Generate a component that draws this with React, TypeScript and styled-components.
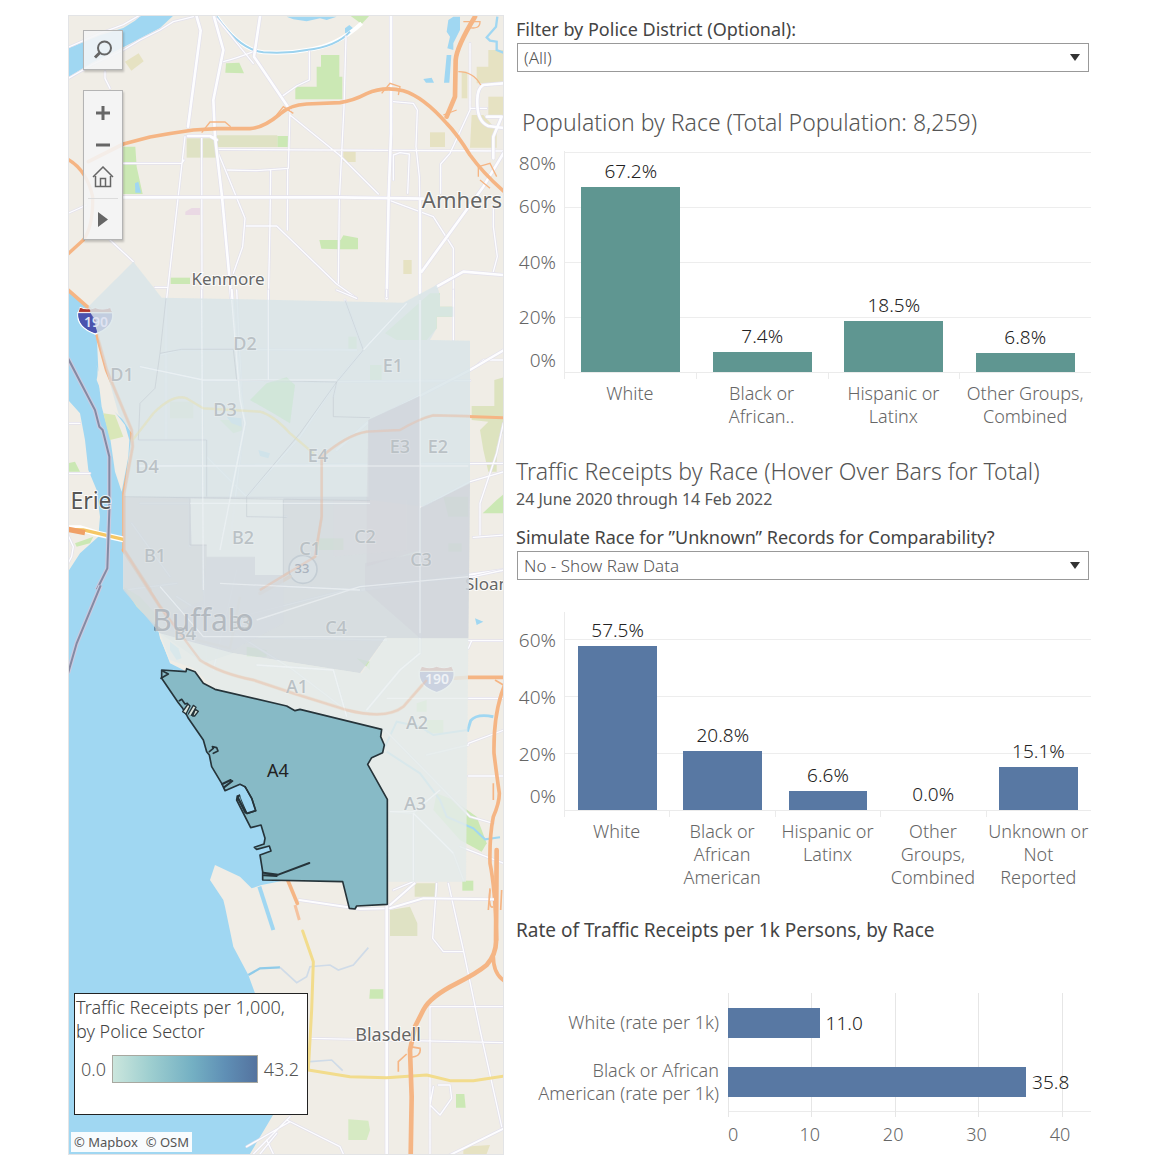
import React from "react";
import styled, { createGlobalStyle } from "styled-components";

const GlobalStyle = createGlobalStyle`
  *, *::before, *::after { box-sizing: border-box; }
  body {
    margin: 0;
    background: #fff;
    color: #555;
    font-family: "Noto Sans", "Open Sans", sans-serif;
  }
`;

/* ---------- page ---------- */

const Dashboard = styled.main`
  display: grid;
  grid-template-columns: minmax(0, 436fr) minmax(0, 575fr);
  gap: 12px;
  padding: 15px 79px 14px 68px;
`;

const SidePanel = styled.div`
  display: flex;
  flex-direction: column;
`;

/* ---------- map ---------- */

const MapPanel = styled.section`
  position: relative;
  min-height: 1140px;
  overflow: hidden;
  border: 1px solid #e3e4e6;
  background: #f0ede6;
`;

const MapCanvas = styled.svg`
  position: absolute;
  inset: 0;
  width: 100%;
  height: 100%;
`;

const ToolStack = styled.div`
  position: absolute;
  top: 14px;
  left: 14px;
  display: flex;
  flex-direction: column;
  gap: 20px;
`;

const ToolGroup = styled.div`
  display: flex;
  flex-direction: column;
  width: 40px;
  border: 1px solid #b4b4b4;
  background: rgba(244, 245, 246, 0.88);
  box-shadow: 1px 2px 2px rgba(0, 0, 0, 0.2);
`;

const ToolButton = styled.button<{ $height: number; $ruled?: boolean }>`
  display: flex;
  align-items: center;
  justify-content: center;
  height: ${(p) => p.$height}px;
  margin: 0 4px;
  padding: 0;
  border: 0;
  border-top: ${(p) => (p.$ruled ? "1px solid #dcdcdc" : "0")};
  background: none;
  color: #666;
  cursor: pointer;
`;

const Legend = styled.div`
  position: absolute;
  left: 5px;
  bottom: 39px;
  width: 234px;
  height: 122px;
  border: 1px solid #222;
  background: #fff;
`;

const LegendTitle = styled.h2`
  margin: 0;
  padding: 1px;
  color: #444;
  font-size: 18px;
  font-weight: 300;
  line-height: 24px;
  white-space: nowrap;
`;

const LegendScale = styled.div`
  display: flex;
  align-items: center;
  gap: 6px;
  margin-top: 11px;
  padding: 0 8px 0 6px;
  font-size: 18px;
  font-weight: 300;
  line-height: 28px;
`;

const LegendRamp = styled.div`
  flex: 1;
  height: 28px;
  border: 1px solid #a8a8a0;
  background: linear-gradient(90deg, #cbe6dd, #9fcfd0 25%, #74b0c3 55%, #5f8fb5 78%, #54739f);
`;

const Attribution = styled.div`
  position: absolute;
  left: 2px;
  bottom: 2px;
  display: flex;
  gap: 8px;
  padding: 0 3px;
  background: rgba(255, 255, 255, 0.92);
  font-size: 13px;
  line-height: 20px;
`;

const AttributionLink = styled.a`
  color: #555;
  text-decoration: none;
`;

/* ---------- filters and headings ---------- */

const Field = styled.div<{ $top: number }>`
  display: flex;
  flex-direction: column;
  padding: ${(p) => p.$top}px 2px 0 0;
`;

const FieldLabel = styled.label`
  color: #444;
  font-size: 18px;
  line-height: 26px;
  white-space: nowrap;
`;

const SelectBox = styled.div`
  position: relative;
  display: flex;
  margin: 1px 0 0 1px;
`;

const Select = styled.select`
  appearance: none;
  width: 100%;
  height: 29px;
  padding: 0 30px 0 6px;
  border: 1px solid #999;
  border-radius: 0;
  background: #fff;
  color: #555;
  font: 300 17px/26px "Noto Sans", "Open Sans", sans-serif;
`;

const SelectArrow = styled.svg`
  position: absolute;
  top: 11px;
  right: 9px;
  pointer-events: none;
`;

const ChartTitle = styled.h2<{ $top: number; $indent?: boolean }>`
  margin: ${(p) => p.$top}px 0 0 ${(p) => (p.$indent ? 6 : 0)}px;
  font-size: 23px;
  font-weight: 300;
  line-height: 30px;
  white-space: nowrap;
`;

const Period = styled.p`
  margin: 0;
  font-size: 16px;
  line-height: 26px;
`;

const RateTitle = styled.h2`
  margin: 27px 0 0;
  color: #444;
  font-size: 19px;
  font-weight: 400;
  line-height: 28px;
  white-space: nowrap;
`;

/* ---------- column charts ---------- */

const ColumnFigure = styled.div<{ $top: number }>`
  display: grid;
  grid-template-columns: 40px minmax(0, 1fr);
  column-gap: 8px;
  margin-top: ${(p) => p.$top}px;
`;

const ValueAxis = styled.div<{ $rows: string }>`
  display: grid;
  grid-template-rows: ${(p) => p.$rows};
  align-items: center;
  color: #666;
  font-size: 19px;
  font-weight: 300;
  line-height: 24px;
  text-align: right;
`;

const Plot = styled.div<{ $height: number }>`
  display: grid;
  height: ${(p) => p.$height}px;
  border-left: 1px solid #ebebeb;
  border-bottom: 1px solid #ebebeb;
`;

const GridLines = styled.div`
  grid-area: 1 / 1;
  display: flex;
  flex-direction: column;
  justify-content: flex-end;
`;

const GridBand = styled.div<{ $height: number }>`
  height: ${(p) => p.$height}px;
  border-top: 1px solid #ededed;
`;

const Columns = styled.div`
  grid-area: 1 / 1;
  display: flex;
`;

const Column = styled.div`
  flex: 1;
  display: flex;
  flex-direction: column;
  justify-content: flex-end;
  align-items: center;
`;

const ColumnValue = styled.span`
  margin-bottom: 4px;
  color: #222;
  font-size: 19px;
  font-weight: 300;
  line-height: 24px;
`;

const ColumnBar = styled.div<{ $color: string }>`
  width: 75%;
  background: ${(p) => p.$color};
`;

const CategoryAxis = styled.div`
  grid-column: 2;
  display: flex;
`;

const Category = styled.div`
  position: relative;
  flex: 1;
  display: flex;
  flex-direction: column;
  align-items: center;
  padding-top: 9px;
  color: #666;
  font-size: 18px;
  font-weight: 300;
  line-height: 23px;
  white-space: nowrap;

  &::before {
    content: "";
    position: absolute;
    top: 0;
    left: 0;
    height: 6px;
    border-left: 1px solid #ebebeb;
  }
`;

/* ---------- rate chart ---------- */

const RateFigure = styled.div`
  display: grid;
  grid-template-columns: 203px minmax(0, 1fr);
  column-gap: 9px;
  margin-top: 49px;
`;

const RateLabels = styled.div`
  display: grid;
  grid-template-rows: 59px 59px;
  align-items: center;
`;

const RateLabel = styled.div`
  display: flex;
  flex-direction: column;
  align-items: flex-end;
  color: #666;
  font-size: 18px;
  font-weight: 300;
  line-height: 23px;
  white-space: nowrap;
`;

const RatePlot = styled.div`
  display: grid;
  border-bottom: 1px solid #ebebeb;
`;

const RateGrid = styled.div`
  grid-area: 1 / 1;
  display: flex;
  margin-bottom: -6px;
`;

const RateGridCell = styled.div`
  flex: 0 0 23%;
  border-left: 1px solid #e6e6e6;

  &:last-child { flex: 1; }
`;

const RateBars = styled.div`
  grid-area: 1 / 1;
  display: grid;
  grid-template-rows: 59px 59px;
`;

const RateRow = styled.div`
  display: flex;
  align-items: center;
  gap: 6px;
`;

const RateBar = styled.div`
  height: 30px;
  background: #5878a3;
`;

const RateValue = styled.span`
  color: #222;
  font-size: 19px;
  font-weight: 300;
  line-height: 24px;
`;

const RateTicks = styled.div`
  grid-column: 2;
  display: flex;
  padding-top: 10px;
  color: #666;
  font-size: 18px;
  font-weight: 300;
  line-height: 24px;
`;

const RateTick = styled.span`
  flex: 0 0 23%;
  text-align: center;

  &:first-child {
    flex-basis: 11%;
    text-align: left;
  }
`;

/* ---------- data ---------- */

type Datum = { value: number; lines: string[] };

const population: Datum[] = [
  { value: 67.2, lines: ["White"] },
  { value: 7.4, lines: ["Black or", "African.."] },
  { value: 18.5, lines: ["Hispanic or", "Latinx"] },
  { value: 6.8, lines: ["Other Groups,", "Combined"] },
];

const receipts: Datum[] = [
  { value: 57.5, lines: ["White"] },
  { value: 20.8, lines: ["Black or", "African", "American"] },
  { value: 6.6, lines: ["Hispanic or", "Latinx"] },
  { value: 0, lines: ["Other", "Groups,", "Combined"] },
  { value: 15.1, lines: ["Unknown or", "Not", "Reported"] },
];

const rates: Datum[] = [
  { value: 11.0, lines: ["White (rate per 1k)"] },
  { value: 35.8, lines: ["Black or African", "American (rate per 1k)"] },
];

const RATE_MAX = 43.6;

type ColumnChartProps = {
  data: Datum[];
  color: string;
  top: number;
  height: number;
  band: number;
  ticks: string[];
  tickRows: string;
};

function ColumnChart({ data, color, top, height, band, ticks, tickRows }: ColumnChartProps) {
  return (
    <ColumnFigure $top={top}>
      <ValueAxis $rows={tickRows}>
        {ticks.map((t) => <span key={t}>{t}</span>)}
      </ValueAxis>
      <Plot $height={height}>
        <GridLines>
          {Array.from({ length: Math.floor(height / band) }, (_, i) => (
            <GridBand key={i} $height={band} />
          ))}
        </GridLines>
        <Columns>
          {data.map((d) => (
            <Column key={d.lines.join(" ")}>
              <ColumnValue>{d.value.toFixed(1)}%</ColumnValue>
              <ColumnBar $color={color} style={{ height: Math.round((d.value / 20) * band) }} />
            </Column>
          ))}
        </Columns>
      </Plot>
      <CategoryAxis>
        {data.map((d) => (
          <Category key={d.lines.join(" ")}>
            {d.lines.map((l) => <span key={l}>{l}</span>)}
          </Category>
        ))}
      </CategoryAxis>
    </ColumnFigure>
  );
}

function DropDown({ id, label, options, top }: { id: string; label: string; options: string[]; top: number }) {
  return (
    <Field $top={top}>
      <FieldLabel htmlFor={id}>{label}</FieldLabel>
      <SelectBox>
        <Select id={id} defaultValue={options[0]}>
          {options.map((o) => <option key={o}>{o}</option>)}
        </Select>
        <SelectArrow width="10" height="7" viewBox="0 0 10 7" aria-hidden="true">
          <path d="M0 0H10L5 7Z" fill="#333" />
        </SelectArrow>
      </SelectBox>
    </Field>
  );
}

/* ---------- map drawing: four tiles stacked north to south, three units per map pixel ---------- */

const TILE_2 = "translate(0 870)";
const TILE_3 = "translate(0 1710)";
const TILE_4 = "translate(0 2550)";

function Roads({ d, width = 6, color = "#fdfdff", casing = "#e3e1ec" }: { d: string; width?: number; color?: string; casing?: string }) {
  return (
    <g fill="none" strokeLinejoin="round" strokeLinecap="round">
      <path d={d} stroke={casing} strokeWidth={width + 4} />
      <path d={d} stroke={color} strokeWidth={width} />
    </g>
  );
}

function Highway({ d, width = 11, color = "#f5b584" }: { d: string; width?: number; color?: string }) {
  return <path d={d} fill="none" stroke={color} strokeWidth={width} strokeLinejoin="round" strokeLinecap="round" />;
}

function Shield({ x, y }: { x: number; y: number }) {
  return (
    <g transform={`translate(${x} ${y})`}>
      <path d="M-52 -14C-56 16 -34 38 0 50C34 38 56 16 52 -14Z" fill="#4a52ae" stroke="#fff" strokeWidth="4" />
      <path d="M-52 -14C-50 -20 -46 -24 -46 -30Q-22 -20 0 -29Q22 -20 46 -30C46 -24 50 -20 52 -14Z" fill="#b64a42" stroke="#fff" strokeWidth="3" />
    </g>
  );
}

function BaseNorth() {
  return (
    <g>
      <path d="M24 145L120 106L190 84L225 62L245 45H342L300 84L190 142L100 186L24 232Z" fill="#a0d7f2" />
      <g fill="#cbe8b4">
        <path d="M783 165H838V230H847V298H706V260H770V200H783Z" />
        <path d="M498 190L538 188L552 220L496 218Z" />
        <path d="M652 408H685V441H652Z" />
        <path d="M190 440H226L230 500L248 582H190Z" />
        <path d="M778 720H842L850 706L894 714V748H842L784 746Z" />
        <path d="M332 833H390V852H332Z" />
        <path d="M868 45H930L905 72Z" />
      </g>
      <g fill="#dfe2c4">
        <path d="M380 415H468V473H380Z" />
        <path d="M468 406H652V441H468Z" />
      </g>
      <g fill="#e6e2c2">
        <path d="M195 185L236 160L251 184L214 212Z" />
        <path d="M1110 397H1155V441H1110Z" />
        <path d="M850 455H887V486H850Z" />
        <path d="M1030 780H1055V822H1030Z" />
        <path d="M1285 150H1332V250H1250V200H1285Z" />
        <path d="M1205 215H1222V295H1205Z" />
        <path d="M1235 345H1270L1310 390V443H1230Z" />
        <path d="M1285 290H1332V345H1285Z" />
      </g>
      <path d="M376 635L395 624H420V645H376Z" fill="#ead9e4" />
      <g fill="#a0d7f2">
        <path d="M1165 60L1180 50H1200V90L1180 130V150L1162 145L1170 110L1160 95Z" />
        <path d="M1160 165H1174L1168 248H1152Z" />
        <path d="M1090 237L1115 233L1122 248H1098Z" />
        <path d="M225 550L235 545L243 578H226Z" />
        <path d="M680 50H830L800 60L780 55L740 64L700 58Z" />
        <path d="M855 85L868 75L885 90L872 100H855Z" />
      </g>
      <path d="M470 50Q540 150 610 157Q680 162 740 150Q830 140 905 70" fill="none" stroke="#fff" strokeWidth="12" />
      <path d="M470 50Q540 150 610 157Q680 162 740 150Q830 140 870 95" fill="none" stroke="#9bd2ee" strokeWidth="6" />
      <path d="M1312 50L1308 80L1280 112L1290 122L1310 125V150L1330 158" fill="none" stroke="#a0d7f2" strokeWidth="7" />
      <Roads
        width={4}
        d="M24 142L120 100L190 74L240 45M24 236L100 192L190 150L240 120L300 90L340 65L400 50M135 215V235L150 265M470 55L580 190M490 185Q530 175 580 155M748 155V240L710 258L665 290M858 110L852 320L838 600L835 850M470 448L1330 453M190 490H365L372 480M500 510L590 512L685 505L690 330M690 345L838 465L955 582M632 512L630 670L625 900M683 505L682 690M555 678H650L830 852L890 895M1000 305L1060 310L1072 330L1068 440L1078 530L1080 640M1230 130V330L1170 460L1142 492V580M1230 325H1280M425 410L426 895M24 640L80 615M150 720L220 785M1000 540V465L1020 458L1048 462L1043 580M375 410L320 895M285 862H320M1300 620V680L1312 770L1300 815M1180 895V745L1120 650L985 600"
      />
      <Roads width={4} d="M475 460L500 520L555 655L548 740L520 820" />
      <Roads
        width={8}
        d="M410 50L422 92L384 380M462 50L490 150L460 300L465 410L486 590L514 895M600 50L582 170L690 330M993 50V400L986 590L980 895M190 592H840L1090 596M384 408H450L470 420M1330 460L1270 560L1085 815M1080 600V880M1330 825L1210 815L1130 860M1330 250L1270 255Q1250 265 1252 310Q1252 365 1285 378L1330 384M1280 350H1325L1300 410V475"
      />
      <g>
        <Highway d="M24 478Q80 510 98 590Q100 680 70 720L24 762" width={10} />
        <Highway d="M85 485L190 432L270 411Q330 400 400 390L470 386H570Q610 384 660 342Q690 315 740 312L840 308Q880 302 920 281Q970 258 1030 272Q1090 290 1160 370Q1190 400 1230 465Q1270 520 1330 573" />
        <Highway d="M1245 50Q1190 140 1187 180L1185 290L1160 350" width={14} />
      </g>
      <path
        d="M425 398L450 366H495L512 380M650 345L670 320L700 340M965 280L990 250L1020 260L1015 285M1150 345L1190 330M1195 215Q1240 215 1262 255M1255 530V500L1290 490L1310 530M1210 65H1260Q1260 90 1225 82M1260 540L1290 565"
        fill="none"
        stroke="#f5b584"
        strokeWidth="4"
      />
    </g>
  );
}

function BaseCity() {
  return (
    <g transform={TILE_2}>
      <path d="M24 0L95 60L110 130L115 240L110 270L140 345L190 390L215 430V480L190 600V900H24V845L60 790L115 740L120 680L110 600L85 540L75 450L60 370L24 330Z" fill="#a0d7f2" />
      <path d="M110 225L124 300L160 360L195 405L208 450L205 500L185 605L165 545L150 440L125 350Z" fill="#f0ede6" />
      <path d="M130 370L165 375L190 440L150 450Z" fill="#d9e7b8" />
      <g fill="#cbe8b4">
        <path d="M24 520L45 515L60 545H24Z" />
        <path d="M570 330L620 280L680 262L705 285L690 400L640 370Z" />
        <path d="M1310 630L1332 612V670H1268Z" />
        <path d="M975 130L1110 10H1140V50H1180V80H1130V115L1100 150H1010Z" />
        <path d="M930 225H965V270H930Z" />
        <path d="M865 140H890V180H865Z" />
        <path d="M775 745H850V780H775Z" />
        <path d="M1150 620H1225V680H1165Z" />
        <path d="M1165 760H1205V785H1165Z" />
        <path d="M480 390H550V420L520 430Z" />
        <path d="M45 760L100 740L90 760L50 770Z" />
      </g>
      <g fill="#dde3bf">
        <path d="M1235 348H1303V270L1332 262V420L1310 470V545H1285L1270 480L1260 420L1285 395L1235 390Z" />
        <path d="M330 335H400V385H330Z" />
      </g>
      <path d="M500 380L545 385V410L515 400ZM595 480L630 490L625 505L600 498Z" fill="#a0d7f2" />
      <Roads
        width={4}
        d="M300 195L365 178L890 180M240 230L430 270L820 275L1230 272M820 320L830 275M425 0L430 900M625 0V270M530 0L550 420L510 760M318 30V450M235 450H440V620M230 528L1332 520M390 625H930M555 680H680M440 500L560 620L720 440L830 275L910 180L1040 40M910 180L855 30M24 400H60M24 550H90M1332 545L1230 575L1090 650M1332 735L1240 742M1332 210H1270L1240 235M1180 0V150M980 0V20M215 700L330 860M195 900L350 880M24 735L40 770L35 800L24 820M830 0L890 25M1260 735V640L1310 490L1330 400M1080 30V900M240 640H930M390 625V770"
      />
      <Roads width={7} d="M515 0L540 300L555 400L480 780M1332 180L1230 240L920 400L830 480M1332 840L900 900" />
      <Highway d="M24 0L95 62L115 150L140 240L215 420L218 470L192 610V780L270 900" />
      <Highway d="M218 450L280 370Q340 310 380 325L430 355L600 365Q640 375 690 430L760 490" width={8} color="#f2dc8c" />
      <Highway d="M1332 383L1120 376Q1080 385 1020 420L920 425Q860 435 785 500V680L765 800L600 900" width={9} />
      <path d="M24 715H60L110 730L190 748" fill="none" stroke="#fff" strokeWidth="18" />
      <path d="M24 718L70 720L190 748" fill="none" stroke="#f5c765" strokeWidth="10" />
      <path d="M24 718L75 728" stroke="#f0a066" strokeWidth="16" />
      <path d="M24 205L105 360L118 410L128 420L148 500V660L142 835L110 900" fill="none" stroke="#c9cbe0" strokeWidth="13" />
      <path d="M24 205L105 360L118 410L128 420L148 500V660L142 835L110 900" fill="none" stroke="#858aa3" strokeWidth="6" />
      <Shield x={106} y={82} />
      <circle cx="729" cy="838" r="42" fill="#fff" stroke="#7d8a9d" strokeWidth="5" />
    </g>
  );
}

function BaseHarbor() {
  return (
    <g transform={TILE_3}>
      <path d="M24 58H195L235 90L285 150L300 200L330 280L430 330L620 700L680 930L605 945L575 955L540 920L465 885L450 930L490 990L495 1010L520 1130L565 1215L585 1270L660 1600L565 1760H24Z" fill="#a0d7f2" />
      <path d="M300 205L330 275L365 290L430 340L520 400L700 430V300L520 200L400 150L285 120Z" fill="#f0ede6" />
      <path d="M330 215L355 235L365 265L350 270L330 240Z" fill="#a0d7f2" />
      <path d="M190 50L240 80L295 140L280 160L230 110Z" fill="#dfe8cc" />
      <path d="M1245 145L1270 155L1250 165Z" fill="#a0d7f2" />
      <g fill="#cbe8b4">
        <path d="M1130 670L1180 690L1250 740L1280 820L1265 845L1200 810L1120 720Z" />
        <path d="M1207 932H1240V962H1207Z" />
        <path d="M1070 400L1100 390V425H1070ZM1100 450H1150V490H1100ZM560 230L620 240V260H560ZM890 265L930 275V300Z" />
      </g>
      <path d="M1064 940H1125V980H1064ZM990 1020L1050 1010L1072 1060V1098H990Z" fill="#dfe2c4" />
      <g fill="none" stroke="#a0d7f2" strokeWidth="9">
        <path d="M1222 485L1232 452Q1250 430 1300 440" />
        <path d="M975 530L1010 455L1080 470L1120 495L1222 480M980 545L1080 610L1140 690L1160 740L1240 775L1275 808L1320 802" strokeWidth="6" />
        <path d="M598 950L640 1080" strokeWidth="12" />
      </g>
      <Roads
        width={4}
        d="M300 50L430 200L520 200L980 210M430 0L440 280M350 80L700 300L870 430M480 40L900 60M530 0L460 300M1225 212H1332M1225 235L1235 212M1225 385H1332M1225 520L1332 480M1225 618H1332M1100 555L1225 525M975 480L1230 740L1300 760M990 725L1060 730L1140 660M1060 730V935L1000 960M1060 730L1180 850L1210 930M1200 830L1332 880M590 285L820 300L860 440M500 150L900 50L1240 20L1332 0"
      />
      <Roads width={6} d="M1080 0V250L1020 300L920 420" />
      <Highway d="M190 -60L300 110L420 270Q480 310 580 330L700 370L860 420Q980 450 1030 410L1100 330L1225 322H1332M600 70L690 20M1332 350Q1300 430 1302 550Q1308 600 1318 670Q1318 700 1300 740Q1288 800 1290 880Q1305 950 1310 1110" />
      <path d="M1300 640V690M1305 330L1330 345M1290 960Q1285 1020 1300 1010" fill="none" stroke="#f5b584" strokeWidth="5" />
      <path d="M24 310L50 220L122 46" fill="none" stroke="#c9cbe0" strokeWidth="13" />
      <path d="M24 310L50 220L122 46" fill="none" stroke="#858aa3" strokeWidth="6" />
      <path d="M410 210L510 235L540 80" fill="none" stroke="#e6e0a8" strokeWidth="8" />
      <Shield x={1130} y={318} />
      <path d="M285 163L300 175L310 180L285 182Z" fill="#222" stroke="#222" strokeWidth="3" />
    </g>
  );
}

function BaseSouth() {
  return (
    <g transform={TILE_4}>
      <g fill="#cbe8b4">
        <path d="M930 418H970V446H928Z" />
        <path d="M1188 732H1213L1217 773H1188Z" />
        <path d="M865 808L925 812L930 840L920 870H865Z" opacity=".7" />
      </g>
      <path d="M1210 890L1290 885L1280 912H1210Z" fill="#e6e2c2" />
      <path d="M565 375L600 355L660 352" fill="none" stroke="#8fcbe9" strokeWidth="7" />
      <path d="M660 352L710 398L740 380L750 350L810 345L835 360L880 345L925 293M750 635L815 630L848 662" fill="none" stroke="#cfdbe8" strokeWidth="5" />
      <Roads
        width={4}
        d="M1332 470H1110V912M1165 100L1210 300L1260 540L1325 830M1130 100L1118 265L1150 305H1210M755 565L1332 578M1135 705H1170L1175 745L1140 795L1110 765L1120 710M680 810L840 890L850 912M580 912L690 800M600 912L650 850M560 890L690 815M620 870L640 912"
      />
      <Roads width={6} d="M718 150L900 177L990 175L1090 145L1300 148M1332 835L1160 920M990 165L1064 100" />
      <Roads width={8} d="M980 165V912" />
      <Highway d="M683 90L712 160" />
      <path d="M705 165L718 210" stroke="#f5c3a0" strokeWidth="9" />
      <Highway d="M728 243L760 335L755 480L745 660L870 680L980 683L1100 675L1170 692H1240L1332 678" width={9} color="#f2dc8c" />
      <Highway d="M1310 0L1308 270Q1310 310 1280 345Q1250 370 1190 400Q1110 440 1090 480L1065 530L1050 600L1055 740L1052 920" width={14} />
      <Highway d="M1300 320Q1300 370 1332 392" />
      <path d="M1015 665V635L1040 612M1050 590L1080 595Q1085 620 1050 622M1290 115L1285 180M1325 120L1322 180" fill="none" stroke="#f5b584" strokeWidth="5" />
    </g>
  );
}

const A4_OUTLINE =
  "M305 300L378 305L380 296L405 305L430 340L465 358L680 408L705 422L720 418L965 478L962 500L973 525L968 548L935 563L923 583L982 688V1003L890 1008L885 1017L868 1015L848 935L608 930V905L600 855L633 843L628 828L590 838L583 832L612 822L615 805L603 765L572 773L530 690L532 678L542 675L545 690L562 730L587 722L575 685L555 650L540 643L495 662L485 640L455 590L448 555L440 545L430 510L385 445L380 435L368 415L355 398L305 325Z";

function Sectors() {
  return (
    <g fillOpacity=".84">
      <path d="M220 785L305 893L1030 908L1130 855L1140 885V920H1180V950H1130V985L1110 1020L1230 1022V1450L1090 1520L930 1500L390 1495L190 1490L215 1300L175 1240L125 1060L110 990L85 920L110 895Z" fill="#d9e5e8" />
      <path d="M925 1260L1080 1188V1524L1230 1450L1225 1915H975L900 2020L520 1960L430 1990L300 1900L190 1770V1490H925Z" fill="#d2dadf" />
      <path d="M390 1495H670V1725H585V1670H440V1635H395Z" fill="#e2eaeb" />
      <path d="M440 1672H585V1725H670V1870L520 1950L430 1980L300 1860L430 1800Z" fill="#d6dbe1" fillOpacity=".7" />
      <path d="M300 1900L520 1960L905 2020L975 1915H1225L1218 2645H985V2398L923 2293L973 2235L965 2188L700 2128L465 2068L400 2005L330 1980Z" fill="#e4ebea" />
      <path d="M925 1260L1080 1188V1524V1650L920 1700V1500Z" fill="#d2d2d9" fillOpacity=".4" />
      <path d="M1230 1450L1080 1524V1660L915 1690V1770L1080 1915H1225Z" fill="#cfd1d9" fillOpacity=".4" />
      <path d="M820 1500H1040V1650L820 1670Z" fill="#dadbe0" fillOpacity=".2" />
    </g>
  );
}

type MapLabel = { text: string; x: number; y: number; size?: number; color?: string; weight?: number };

const placeLabels: MapLabel[] = [
  { text: "Amhers", x: 462, y: 208, size: 22, color: "#666" },
  { text: "Kenmore", x: 228, y: 285, size: 17, color: "#666" },
  { text: "Erie", x: 91, y: 509, size: 23, color: "#555" },
  { text: "Sloan", x: 487, y: 590, size: 17, color: "#666" },
];

const sectorLabels: MapLabel[] = [
  { text: "D2", x: 245, y: 350 },
  { text: "D1", x: 122, y: 381 },
  { text: "E1", x: 393, y: 372 },
  { text: "D3", x: 225, y: 416 },
  { text: "E4", x: 318, y: 462 },
  { text: "E3", x: 400, y: 453 },
  { text: "E2", x: 438, y: 453 },
  { text: "D4", x: 147, y: 473 },
  { text: "B2", x: 243, y: 544 },
  { text: "B1", x: 155, y: 562 },
  { text: "C1", x: 310, y: 555 },
  { text: "C2", x: 365, y: 543 },
  { text: "C3", x: 421, y: 566 },
  { text: "B3", x: 240, y: 629 },
  { text: "B4", x: 185, y: 640 },
  { text: "C4", x: 336, y: 634 },
  { text: "A1", x: 297, y: 693 },
  { text: "A2", x: 417, y: 729 },
  { text: "A3", x: 415, y: 810 },
];

const overLabels: MapLabel[] = [
  { text: "Buffalo", x: 203, y: 631, size: 30, color: "#b3b9bf" },
  { text: "Blasdell", x: 388, y: 1041, size: 18, color: "#666" },
];

function Labels({ items }: { items: MapLabel[] }) {
  return (
    <g textAnchor="middle" fontFamily="'Noto Sans', sans-serif">
      {items.map((l) => (
        <text
          key={l.text}
          x={l.x}
          y={l.y}
          fontSize={l.size ?? 18}
          fontWeight={l.color ? 400 : 500}
          fill={l.color ?? "#bac1c5"}
          stroke="#fff"
          strokeOpacity={l.size === 30 || !l.color ? 0.2 : 0.8}
          strokeWidth="2"
          paintOrder="stroke"
        >
          {l.text}
        </text>
      ))}
    </g>
  );
}

function SectorMap() {
  return (
    <MapCanvas viewBox="69 16 434 1138" preserveAspectRatio="xMidYMid slice" role="img" aria-label="Map of police sectors">
      <g transform="translate(60 0) scale(0.333333)">
        <BaseNorth />
        <BaseCity />
        <BaseHarbor />
        <BaseSouth />
      </g>
      <Labels items={placeLabels} />
      <g transform="translate(60 0) scale(0.333333)">
        <Sectors />
        <path
          d="M318 895L300 1060L285 1165L240 1210L235 1320M300 1060L365 1048H520L530 1140L830 1146L820 1190V1250L930 1253M235 1320H440V1490M670 1500V1725M855 900L910 1050L830 1146L720 1300L560 1490V1550L680 1552M190 1490L930 1502M390 1495V1635H440"
          fill="none"
          stroke="#c6ced4"
          strokeOpacity=".65"
          strokeWidth="3"
        />
        <path
          d="M425 900L430 1770M625 900V1140M515 900L540 1200L555 1270L480 1650M240 1100L430 1140H830M910 1050L1040 910M1080 900V1900M230 1398H1225M390 1510H930M300 1760L430 1910H980M480 1750L900 1770M590 1860L900 1760L1225 1730M590 1995L820 2010L860 2150M1080 1960L1020 2010L920 2130M990 2435H1060L1140 2370M1060 2440V2640M1060 2440L1180 2560M1225 2095H980"
          fill="none"
          stroke="#f2f6f8"
          strokeOpacity=".55"
          strokeWidth="4"
        />
        <g fill="none" strokeOpacity=".45">
          <path d="M218 1320L280 1240Q340 1180 380 1195L430 1225L600 1235Q640 1245 690 1300L760 1360" stroke="#e8e3b8" strokeWidth="6" />
          <path d="M1230 1248L1120 1246Q1080 1255 1020 1290L920 1295Q860 1305 785 1370V1550L765 1670L600 1770M115 1020L140 1110L215 1290L218 1340L192 1480V1650L300 1820L420 1980Q480 2020 580 2040L700 2080L860 2130Q980 2160 1030 2120L1100 2040" stroke="#e8bfa8" strokeWidth="7" />
          <path d="M570 1200L620 1150L680 1132L705 1155L690 1270L640 1240Z" fill="#c8e6d0" stroke="none" fillOpacity=".4" />
        </g>
        <path d="M54 940C54 970 74 990 106 1000V960L92 940Z" fill="#4a52ae" fillOpacity=".85" />
        <path d="M57 934L60 924Q74 930 88 928L92 934Z" fill="#b0372c" />
        <g transform={TILE_3} fill="none" stroke="#26343a" strokeWidth="5" strokeLinejoin="round" strokeLinecap="round">
          <path d={A4_OUTLINE} fill="#87bac6" />
          <path d="M303 325L325 312L308 303M358 392L365 388L375 402L382 400M448 545L460 535L457 530L470 533L474 543L460 550" />
          <path d="M368 425L384 402L390 408L378 432ZM385 432L400 406L408 412L394 436M398 438L406 418L415 424L404 438Z" fill="#dbe5dc" strokeWidth="4" />
          <path d="M492 652L517 633M487 642L512 630M534 684L556 728M610 908L655 914L748 879M612 916L650 918" strokeWidth="6" />
          <path d="M545 690L562 728L584 720L573 688L556 656L538 668Z" fill="#a0d7f2" stroke="none" />
          <path d="M532 688L538 676M536 688L560 730L587 722L575 685L555 650" />
        </g>
      </g>
      <Labels items={sectorLabels} />
      <Labels items={overLabels} />
      <g textAnchor="middle" fontFamily="'Noto Sans', sans-serif">
        <text x="278" y="777" fontSize="18" fill="#222">A4</text>
        <text x="96" y="327" fontSize="14" fontWeight="600" fill="#dfe3f2">190</text>
        <text x="437" y="684" fontSize="14" fontWeight="600" fill="#eff2f6">190</text>
        <text x="302" y="573" fontSize="13" fontWeight="500" fill="#aab3be">33</text>
      </g>
    </MapCanvas>
  );
}

export default function App() {
  return (
    <>
      <GlobalStyle />
      <Dashboard>
        <MapPanel>
          <SectorMap />
          <ToolStack>
            <ToolGroup>
              <ToolButton $height={38} aria-label="Search the map">
                <svg width="20" height="20" viewBox="0 0 20 20" fill="none" stroke="currentColor" strokeWidth="2">
                  <circle cx="11.5" cy="8" r="6.500" />
                  <path d="M7 12.500L2 17.500" strokeWidth="3" />
                </svg>
              </ToolButton>
            </ToolGroup>
            <ToolGroup>
              <ToolButton $height={43} aria-label="Zoom in">
                <svg width="16" height="16" viewBox="0 0 16 16" fill="none" stroke="currentColor" strokeWidth="3">
                  <path d="M8 1V15M1 8H15" />
                </svg>
              </ToolButton>
              <ToolButton $height={21} aria-label="Zoom out">
                <svg width="16" height="16" viewBox="0 0 16 16" fill="none" stroke="currentColor" strokeWidth="3">
                  <path d="M1 8H15" />
                </svg>
              </ToolButton>
              <ToolButton $height={43} aria-label="Reset the view">
                <svg width="22" height="22" viewBox="0 0 22 22" fill="none" stroke="currentColor" strokeWidth="1.5">
                  <path d="M1 11L11 1L21 11M3.500 10V20.500H18.500V10M8.500 20V12.500H13.500V20" />
                </svg>
              </ToolButton>
              <ToolButton $height={41} $ruled aria-label="More map tools">
                <svg width="10" height="15" viewBox="0 0 10 15" fill="currentColor">
                  <path d="M0 0L10 7.500L0 15Z" />
                </svg>
              </ToolButton>
            </ToolGroup>
          </ToolStack>
          <Legend>
            <LegendTitle>
              Traffic Receipts per 1,000,
              <br />
              by Police Sector
            </LegendTitle>
            <LegendScale>
              <span>0.0</span>
              <LegendRamp />
              <span>43.2</span>
            </LegendScale>
          </Legend>
          <Attribution>
            <AttributionLink href="#mapbox">© Mapbox</AttributionLink>
            <AttributionLink href="#osm">© OSM</AttributionLink>
          </Attribution>
        </MapPanel>

        <SidePanel>
          <DropDown id="district" label="Filter by Police District (Optional):" options={["(All)", "A", "B", "C", "D", "E"]} top={1} />

          <ChartTitle $top={35} $indent>Population by Race (Total Population: 8,259)</ChartTitle>
          <ColumnChart
            data={population}
            color="#5f9691"
            top={14}
            height={222}
            band={55}
            ticks={["80%", "60%", "40%", "20%", "0%"]}
            tickRows="24px 62px 50px 60px 26px"
          />

          <ChartTitle $top={28}>Traffic Receipts by Race (Hover Over Bars for Total)</ChartTitle>
          <Period>24 June 2020 through 14 Feb 2022</Period>
          <DropDown id="simulate" label="Simulate Race for ”Unknown” Records for Comparability?" options={["No - Show Raw Data", "Yes - Simulate Race"]} top={12} />
          <ColumnChart
            data={receipts}
            color="#5878a3"
            top={32}
            height={199}
            band={57}
            ticks={["60%", "40%", "20%", "0%"]}
            tickRows="56px 58px 56px 28px"
          />

          <RateTitle>Rate of Traffic Receipts per 1k Persons, by Race</RateTitle>
          <RateFigure>
            <RateLabels>
              {rates.map((r) => (
                <RateLabel key={r.value}>
                  {r.lines.map((l) => <span key={l}>{l}</span>)}
                </RateLabel>
              ))}
            </RateLabels>
            <RatePlot>
              <RateGrid>
                {[0, 10, 20, 30, 40].map((t) => <RateGridCell key={t} />)}
              </RateGrid>
              <RateBars>
                {rates.map((r) => (
                  <RateRow key={r.value}>
                    <RateBar style={{ width: `${(r.value / RATE_MAX) * 100}%` }} />
                    <RateValue>{r.value.toFixed(1)}</RateValue>
                  </RateRow>
                ))}
              </RateBars>
            </RatePlot>
            <RateTicks>
              {[0, 10, 20, 30, 40].map((t) => <RateTick key={t}>{t}</RateTick>)}
            </RateTicks>
          </RateFigure>
        </SidePanel>
      </Dashboard>
    </>
  );
}
